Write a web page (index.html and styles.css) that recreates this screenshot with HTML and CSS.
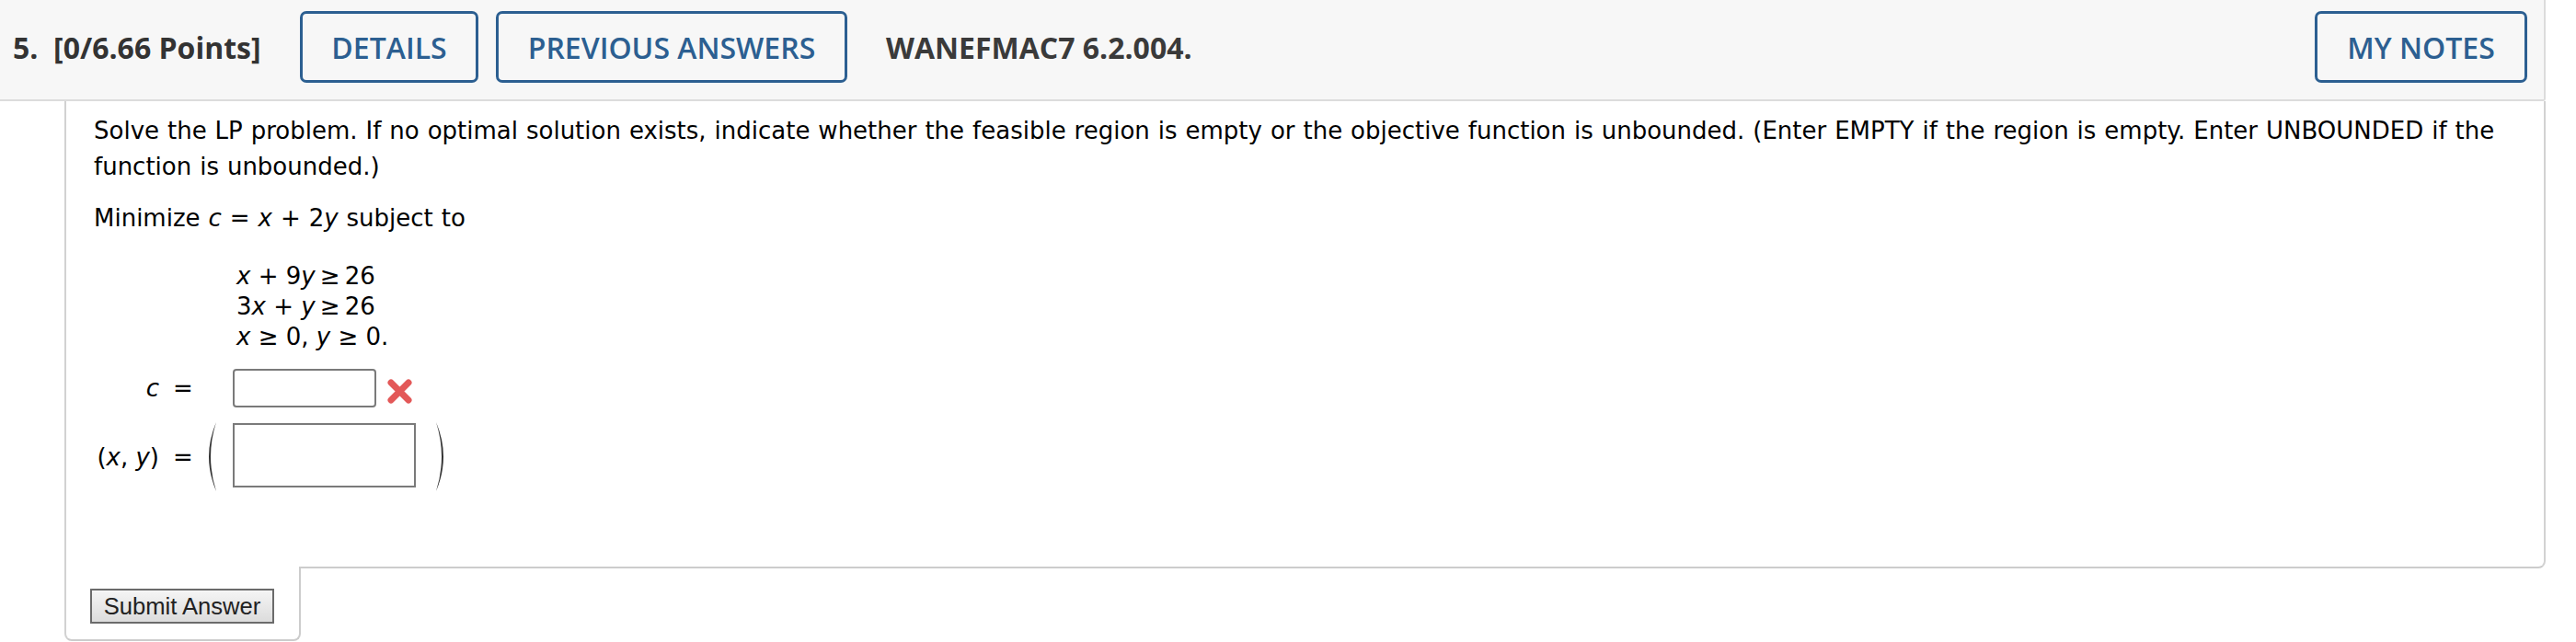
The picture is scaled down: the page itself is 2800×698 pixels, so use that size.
FILE: index.html
```html
<!DOCTYPE html>
<html lang="en">
<head>
<meta charset="utf-8">
<title>WebAssign Question</title>
<link rel="stylesheet" href="styles.css">
</head>
<body>
<div class="header">
  <div class="qnum">5.&nbsp; [0/6.66 Points]</div>
  <div class="hbtn details">DETAILS</div>
  <div class="hbtn prev">PREVIOUS ANSWERS</div>
  <div class="qid">WANEFMAC7 6.2.004.</div>
  <div class="hbtn notes">MY NOTES</div>
</div>
<div class="qbox">
  <p class="para">Solve the LP problem. If no optimal solution exists, indicate whether the feasible region is empty or the objective function is unbounded. (Enter EMPTY if the region is empty. Enter UNBOUNDED if the function is unbounded.)</p>
  <p class="para">Minimize <i>c</i> = <i>x</i> + 2<i>y</i> subject to</p>
  <div class="constraints">
    <div class="cline"><i>x</i> + 9<i>y</i>&#8201;&ge;&#8201;26</div>
    <div class="cline">3<i>x</i> + <i>y</i>&#8201;&ge;&#8201;26</div>
    <div class="cline"><i>x</i> &ge; 0, <i>y</i> &ge; 0.</div>
  </div>
  <div class="arow row1">
    <div class="alabel"><i>c</i></div>
    <div class="aeq">=</div>
    <div class="inp inp-c"></div>
    <svg class="xmark" width="27" height="27" viewBox="0 0 27 27"><path d="M4 4 L23 23 M23 4 L4 23" stroke="#e35858" stroke-width="7" stroke-linecap="round" fill="none"/></svg>
  </div>
  <div class="arow row2">
    <div class="alabel">(<i>x</i>, <i>y</i>)</div>
    <div class="aeq">=</div>
    <svg class="paren lp" width="17" height="77" viewBox="0 0 17 77"><path d="M15 1 Q-1 38.5 15 76 Q3 38.5 15 1 Z" fill="#333"/></svg>
    <div class="inp inp-xy"></div>
    <svg class="paren rp" width="17" height="77" viewBox="0 0 17 77"><path d="M2 1 Q18 38.5 2 76 Q14 38.5 2 1 Z" fill="#333"/></svg>
  </div>
</div>
<div class="tab">
  <div class="submit">Submit Answer</div>
</div>
</body>
</html>
```

FILE: styles.css
```css
html, body {
  margin: 0;
  padding: 0;
  background: #ffffff;
}

.header {
  box-sizing: border-box;
  width: 2767px;
  height: 110px;
  padding: 12px 18px 18px 14px;
  background: #f7f7f7;
  border-bottom: 2px solid #dcdcdc;
  border-right: 2px solid #dcdcdc;
  border-bottom-right-radius: 3px;
  display: flex;
  align-items: center;
  font-family: "Open Sans", "Liberation Sans", sans-serif;
}

.qnum {
  width: 312px;
  font-size: 32px;
  font-weight: 700;
  color: #333333;
  white-space: nowrap;
}

.hbtn {
  box-sizing: border-box;
  height: 78px;
  border: 3px solid #2c5f91;
  border-radius: 7px;
  display: flex;
  align-items: center;
  justify-content: center;
  font-size: 32px;
  font-weight: 600;
  color: #2c5f91;
  white-space: nowrap;
}

.details { width: 194px; }
.prev { width: 382px; margin-left: 19px; }
.notes { width: 231px; margin-left: auto; }

.qid {
  margin-left: 42px;
  font-size: 32px;
  font-weight: 700;
  color: #3a3a3a;
  white-space: nowrap;
}

.qbox {
  box-sizing: border-box;
  width: 2697px;
  margin-left: 70px;
  padding: 13px 30px 81px 30px;
  border-left: 2px solid #d2d2d2;
  border-right: 2px solid #d2d2d2;
  border-bottom: 2px solid #cccccc;
  border-bottom-right-radius: 8px;
  font-family: "DejaVu Sans", Verdana, sans-serif;
  font-size: 26px;
  color: #000000;
}

.para {
  margin: 0 0 17px 0;
  line-height: 39px;
  word-spacing: 0.7px;
}

.constraints {
  margin-top: 27px;
  margin-left: 155px;
  line-height: 33px;
}

.arow {
  display: flex;
  align-items: center;
}

.row1 { margin-top: 18px; }
.row2 { margin-top: 15px; }

.alabel {
  width: 71px;
  text-align: right;
  white-space: nowrap;
}

.aeq {
  width: 30px;
  margin-left: 15px;
}

.inp {
  box-sizing: border-box;
  border: 2px solid #7a7a7a;
  background: #ffffff;
}

.inp-c {
  width: 156px;
  height: 42px;
  margin-left: 35px;
  border-radius: 4px;
}

.xmark {
  margin-left: 12px;
  margin-top: 7px;
}

.lp { margin-left: 2px; }

.inp-xy {
  width: 199px;
  height: 70px;
  margin-left: 16px;
  margin-top: -4px;
}

.rp { margin-left: 20px; }

.tab {
  box-sizing: border-box;
  position: relative;
  width: 257px;
  margin-left: 70px;
  margin-top: -2px;
  padding: 24px 0 17px 26px;
  background: #ffffff;
  border-left: 2px solid #d2d2d2;
  border-right: 2px solid #cccccc;
  border-bottom: 2px solid #cccccc;
  border-bottom-left-radius: 8px;
  border-bottom-right-radius: 8px;
}

.submit {
  box-sizing: border-box;
  width: 200px;
  height: 38px;
  border: 2px solid #6b6b6b;
  background: linear-gradient(#f5f5f5, #dcdcdc);
  font-family: "Liberation Sans", Arial, sans-serif;
  font-size: 25.6px;
  color: #222222;
  display: flex;
  align-items: center;
  justify-content: center;
  white-space: nowrap;
}
```
